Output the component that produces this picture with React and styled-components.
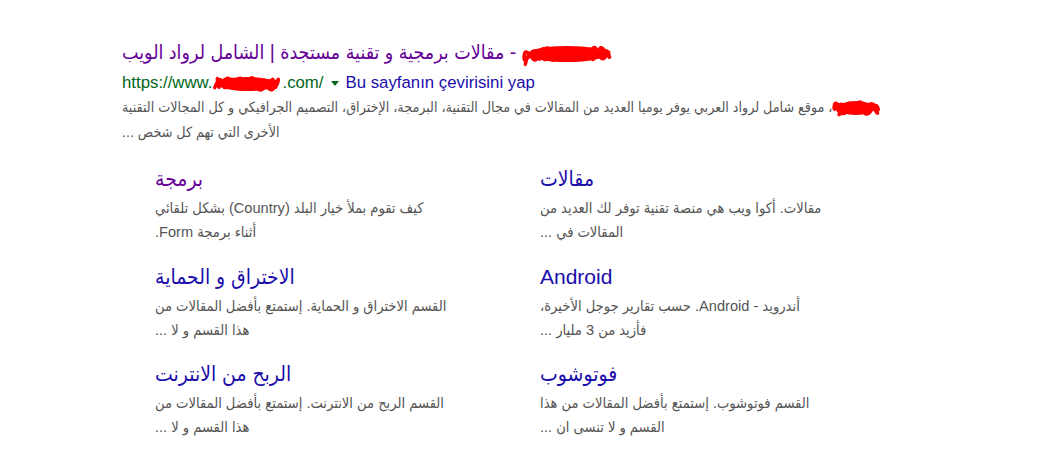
import React from "react";
import styled, { createGlobalStyle } from "styled-components";

const GlobalStyle = createGlobalStyle`
  body {
    margin: 0;
    background: #fff;
    font-family: "Liberation Sans", "DejaVu Sans Condensed", "DejaVu Sans", sans-serif;
  }
`;

const sitelinks = [
  {
    title: "برمجة",
    visited: true,
    lines: ["كيف تقوم بملأ خيار البلد (Country) بشكل تلقائي", "أثناء برمجة Form."],
  },
  {
    title: "مقالات",
    lines: ["مقالات. أكوا ويب هي منصة تقنية توفر لك العديد من", "المقالات في ..."],
  },
  {
    title: "الاختراق و الحماية",
    lines: ["القسم الاختراق و الحماية. إستمتع بأفضل المقالات من", "هذا القسم و لا ..."],
  },
  {
    title: "Android",
    lines: ["أندرويد - Android. حسب تقارير جوجل الأخيرة،", "فأزيد من 3 مليار ..."],
  },
  {
    title: "الربح من الانترنت",
    lines: ["القسم الربح من الانترنت. إستمتع بأفضل المقالات من", "هذا القسم و لا ..."],
  },
  {
    title: "فوتوشوب",
    lines: ["القسم فوتوشوب. إستمتع بأفضل المقالات من هذا", "القسم و لا تنسى ان ..."],
  },
];

// red marker scribble used to hide the site name
const Scribble = ({ width, height, seed = 1 }) => {
  let s = seed * 7919;
  const rnd = () => {
    s = (s * 9301 + 49297) % 233280;
    return s / 233280;
  };
  const pts = [];
  const n = Math.round(width / 6);
  for (let pass = 0; pass < 4; pass++) {
    for (let j = 0; j < n; j++) {
      const i = pass % 2 ? n - 1 - j : j;
      const x = 4 + (i / (n - 1)) * (width - 8) + (rnd() - 0.5) * 8;
      const top = 0.08 + rnd() * 0.25;
      const bottom = 0.62 + rnd() * 0.3;
      const y = (i + pass) % 2 ? height * top : height * bottom;
      pts.push([x, y]);
    }
  }
  let d = `M${pts[0][0].toFixed(1)} ${pts[0][1].toFixed(1)}`;
  for (let i = 1; i < pts.length - 1; i++) {
    const mx = (pts[i][0] + pts[i + 1][0]) / 2;
    const my = (pts[i][1] + pts[i + 1][1]) / 2;
    d += ` Q${pts[i][0].toFixed(1)} ${pts[i][1].toFixed(1)} ${mx.toFixed(1)} ${my.toFixed(1)}`;
  }
  return (
    <ScribbleBox $w={width} $h={height}>
      <svg width={width} height={height} viewBox={`0 0 ${width} ${height}`}>
        <ellipse
          cx={width / 2}
          cy={height / 2}
          rx={width / 2 - 6}
          ry={height / 2 - 5}
          fill="#f00"
        />
        <path
          d={d}
          fill="none"
          stroke="#f00"
          strokeWidth="3.5"
          strokeLinejoin="round"
          strokeLinecap="round"
        />
      </svg>
    </ScribbleBox>
  );
};

const App = () => {
  return (
    <>
      <GlobalStyle />
      <Result>
        <Title href="#">
          <Scribble width={90} height={26} seed={3} /> - مقالات برمجية و تقنية مستجدة | الشامل لرواد الويب
        </Title>
        <UrlRow>
          <Cite>
            https://www.
            <Scribble width={70} height={24} seed={7} />
            .com/
          </Cite>
          <Arrow />
          <Translate href="#">Bu sayfanın çevirisini yap</Translate>
        </UrlRow>
        <Snippet>
          <Scribble width={48} height={24} seed={5} />، موقع شامل لرواد العربي يوفر يوميا العديد من المقالات في مجال التقنية، البرمجة، الإختراق، التصميم الجرافيكي و كل المجالات التقنية
          <br />
          الأخرى التي تهم كل شخص ...
        </Snippet>

        <Sitelinks>
          {sitelinks.map((item) => (
            <Sitelink key={item.title}>
              <SitelinkTitle href="#" $visited={item.visited}>
                {item.title}
              </SitelinkTitle>
              <SitelinkDesc>
                {item.lines[0]}
                <br />
                {item.lines[1]}
              </SitelinkDesc>
            </Sitelink>
          ))}
        </Sitelinks>
      </Result>
    </>
  );
};

const Result = styled.div`
  padding: 37px 0 0 122px;
  width: 800px;
`;

const Title = styled.a`
  display: block;
  height: 30px;
  direction: rtl;
  text-align: left;
  font-size: 19.5px;
  line-height: 30px;
  color: #660099;
  text-decoration: none;
  white-space: nowrap;
`;

const ScribbleBox = styled.span`
  display: inline-block;
  width: ${({ $w }) => $w}px;
  height: ${({ $h }) => $h}px;
  margin: -3px 0;
  vertical-align: middle;

  svg {
    display: block;
  }
`;

const UrlRow = styled.div`
  display: flex;
  align-items: center;
  height: 24px;
  margin-top: 4px;
  font-size: 16.8px;
  line-height: 24px;
  white-space: nowrap;
`;

const Cite = styled.cite`
  font-style: normal;
  color: #006621;
`;

const Arrow = styled.span`
  width: 0;
  height: 0;
  margin: 1px 7px 0 7px;
  border-left: 4px solid transparent;
  border-right: 4px solid transparent;
  border-top: 5px solid #006621;
`;

const Translate = styled.a`
  color: #1a0dab;
  text-decoration: none;
`;

const Snippet = styled.div`
  direction: rtl;
  text-align: left;
  font-size: 14.2px;
  line-height: 24.5px;
  color: #545454;
  white-space: nowrap;
`;

const Sitelinks = styled.div`
  display: grid;
  grid-template-columns: 385px 385px;
  row-gap: 18.5px;
  margin: 21px 0 0 33px;
`;

const Sitelink = styled.div`
  display: flex;
  flex-direction: column;
  align-items: flex-start;
`;

const SitelinkTitle = styled.a`
  direction: rtl;
  font-size: 21px;
  line-height: 28px;
  margin-bottom: 3px;
  color: ${({ $visited }) => ($visited ? "#660099" : "#1a0dab")};
  text-decoration: none;
`;

const SitelinkDesc = styled.div`
  direction: rtl;
  text-align: left;
  font-size: 14.6px;
  line-height: 24px;
  color: #545454;
  white-space: nowrap;
`;

export default App;
